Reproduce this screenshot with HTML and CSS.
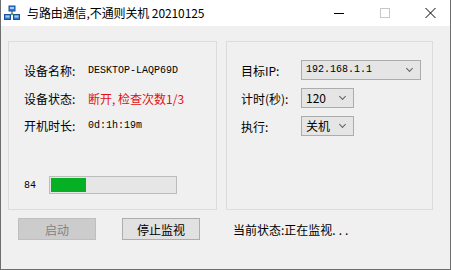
FILE: index.html
```html
<!DOCTYPE html>
<html>
<head>
<meta charset="utf-8">
<link rel="stylesheet" href="styles.css">
</head>
<body>
<div class="window">
  <div class="titlebar">
    <svg class="appicon" width="16" height="16" viewBox="0 0 16 16">
      <path d="M8 6 L8 9 M3.5 11 L8 9 L12.5 11" stroke="#3a3a3a" stroke-width="1" fill="none"/>
      <rect x="5" y="1" width="6" height="5" fill="#2f7fd8" stroke="#1d4f9a"/>
      <rect x="6" y="2" width="4" height="2" fill="#9fd0ff"/>
      <rect x="0.5" y="9.5" width="6" height="5" fill="#2f7fd8" stroke="#1d4f9a"/>
      <rect x="1.5" y="10.5" width="4" height="2" fill="#9fd0ff"/>
      <rect x="9.5" y="9.5" width="6" height="5" fill="#2f7fd8" stroke="#1d4f9a"/>
      <rect x="10.5" y="10.5" width="4" height="2" fill="#9fd0ff"/>
      <circle cx="8" cy="9" r="1.3" fill="#4caf50"/>
    </svg>
    <span class="title">与路由通信,不通则关机 20210125</span>
    <div class="controls">
      <svg class="ctl" width="46" height="26" viewBox="0 0 46 26"><path d="M18 13.5 H28" stroke="#000" stroke-width="1"/></svg>
      <svg class="ctl" width="46" height="26" viewBox="0 0 46 26"><rect x="18.5" y="8.5" width="9" height="9" fill="none" stroke="#c8c8c8"/></svg>
      <svg class="ctl" width="46" height="26" viewBox="0 0 46 26"><path d="M17.5 8 L27.5 18 M27.5 8 L17.5 18" stroke="#000" stroke-width="1"/></svg>
    </div>
  </div>
  <div class="body">
    <div class="groups">
      <div class="group left">
        <div class="row"><span class="lbl">设备名称:</span><span class="val">DESKTOP-LAQP69D</span></div>
        <div class="row"><span class="lbl">设备状态:</span><span class="val red">断开<span class="wide-comma">,</span>检查次数1/3</span></div>
        <div class="row"><span class="lbl">开机时长:</span><span class="val">0d:1h:19m</span></div>
        <div class="progress-row">
          <span class="pnum">84</span>
          <div class="bar"><div class="fill" style="width:28%"></div></div>
        </div>
      </div>
      <div class="group right">
        <div class="crow"><span class="clbl">目标IP:</span><div class="combo wide"><span class="ctext mono">192.168.1.1</span><span class="chev"></span></div></div>
        <div class="crow"><span class="clbl">计时(秒):</span><div class="combo"><span class="ctext">120</span><span class="chev"></span></div></div>
        <div class="crow"><span class="clbl">执行:</span><div class="combo"><span class="ctext">关机</span><span class="chev"></span></div></div>
      </div>
    </div>
    <div class="bottom">
      <button class="btn disabled">启动</button>
      <button class="btn">停止监视</button>
      <span class="status">当前状态:正在监视<span class="dots">...</span></span>
    </div>
  </div>
</div>
</body>
</html>
```

FILE: styles.css
```css
html, body {
  margin: 0;
  padding: 0;
  background: #f0f0f0;
}
body {
  font-family: "Noto Sans CJK SC", "Noto Sans", sans-serif;
  font-size: 12px;
  color: #000;
}
.window {
  width: 451px;
  height: 270px;
  box-sizing: border-box;
  border-left: 1px solid #6e6e6e;
  border-right: 1px solid #6e6e6e;
  border-bottom: 1px solid #6e6e6e;
  background: #f0f0f0;
  display: flex;
  flex-direction: column;
}
.titlebar {
  height: 26px;
  background: #ffffff;
  display: flex;
  align-items: center;
  flex-shrink: 0;
}
.appicon {
  margin-left: 3px;
  margin-right: 7px;
}
.title {
  font-size: 12px;
  line-height: 26px;
  letter-spacing: -0.1px;
}
.controls {
  margin-left: auto;
  display: flex;
  margin-right: -4px;
}
.ctl { display: block; }
.body {
  flex: 1;
  padding: 15px 0 0 7px;
  display: flex;
  flex-direction: column;
}
.groups {
  display: flex;
  gap: 9px;
}
.group {
  height: 169px;
  box-sizing: border-box;
  border: 1px solid #dcdcdc;
  display: flex;
  flex-direction: column;
}
.group.left {
  width: 209px;
  padding: 15px 0 15px 15px;
}
.group.right {
  width: 207px;
  padding: 18px 0 0 14px;
  gap: 8px;
}
.row {
  height: 27.5px;
  display: flex;
  align-items: center;
}
.lbl {
  width: 64px;
  flex-shrink: 0;
}
.val {
  font-family: "Liberation Mono", monospace;
  font-size: 10px;
}
.val.red {
  font-family: "Noto Sans CJK SC", sans-serif;
  font-size: 12px;
  color: #e01010;
}
.wide-comma {
  display: inline-block;
  width: 6px;
}
.progress-row {
  margin-top: auto;
  display: flex;
  align-items: center;
  height: 18px;
}
.pnum {
  font-family: "Liberation Mono", monospace;
  font-size: 10px;
  width: 25px;
}
.bar {
  width: 128px;
  height: 18px;
  box-sizing: border-box;
  border: 1px solid #bcbcbc;
  background: #e6e6e6;
  padding: 1px;
  display: flex;
}
.fill {
  background: #06b025;
  height: 100%;
}
.crow {
  display: flex;
  align-items: center;
  height: 20px;
}
.clbl {
  width: 60px;
  flex-shrink: 0;
}
.combo {
  width: 53px;
  height: 20px;
  box-sizing: border-box;
  border: 1px solid #acacac;
  background: #e5e5e5;
  display: flex;
  align-items: center;
  padding-left: 4px;
  position: relative;
}
.combo.wide { width: 120px; }
.ctext { font-size: 12px; line-height: 18px; }
.ctext.mono {
  font-family: "Liberation Mono", monospace;
  font-size: 10px;
}
.chev {
  position: absolute;
  right: 8px;
  top: 5px;
  width: 4px;
  height: 4px;
  border-right: 1px solid #606060;
  border-bottom: 1px solid #606060;
  transform: rotate(45deg);
}
.bottom {
  margin-top: 8px;
  display: flex;
  align-items: center;
  padding-left: 10px;
}
.btn {
  width: 78px;
  height: 22px;
  box-sizing: border-box;
  border: 1px solid #adadad;
  background: #e1e1e1;
  font-family: "Noto Sans CJK SC", sans-serif;
  font-size: 12px;
  color: #000;
  padding: 0;
  margin: 0;
}
.btn.disabled {
  background: #cccccc;
  border-color: #bfbfbf;
  color: #838383;
}
.btn + .btn { margin-left: 26px; }
.status {
  margin-left: 33px;
}
.dots {
  letter-spacing: 3px;
}
```
